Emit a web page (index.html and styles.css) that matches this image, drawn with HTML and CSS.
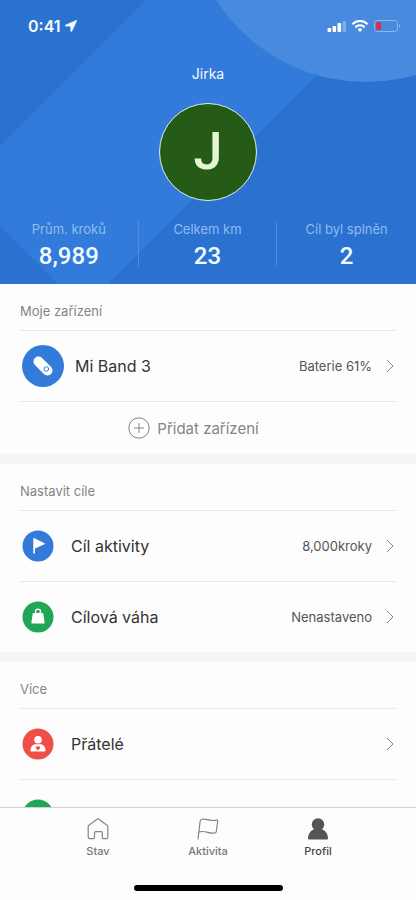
FILE: index.html
```html
<!DOCTYPE html>
<html lang="cs">
<head>
<meta charset="utf-8">
<meta name="viewport" content="width=device-width, initial-scale=1">
<title>Profil</title>
<link rel="stylesheet" href="styles.css">
</head>
<body>
<main class="content">
  <header class="hero">
    <svg class="hero-art" viewBox="0 0 416 284" preserveAspectRatio="xMidYMid slice" aria-hidden="true">
      <path fill="#337bda" d="M146 0H392L108 284H58L0 226V146Z"/>
      <circle cx="366" cy="-96" r="178" fill="#488ade"/>
    </svg>
    <div class="status">
      <div class="status-time">
        <span>0:41</span>
        <svg width="12" height="12" viewBox="0 0 12 12" aria-hidden="true"><path fill="#f2fbff" stroke="#f2fbff" stroke-width=".6" d="M11.2.4.6 5.1c-.6.3-.5 1 .2 1l4.9.1.1 4.900c0 .7.7.8 1 .2L11.600.900c.2-.4 0-.7-.4-.5Z"/></svg>
      </div>
      <svg width="74" height="14" viewBox="0 0 74 14" aria-hidden="true">
        <g fill="#fff">
          <rect x="0.500" y="9" width="3.600" height="4" rx="1"/>
          <rect x="5.500" y="7" width="3.600" height="6" rx="1"/>
          <rect x="10.500" y="4" width="3.600" height="9" rx="1"/>
          <rect x="15.500" y="2" width="3.600" height="11" rx="1" opacity=".3"/>
          <path d="m33 12.900 2.400-2.500a3.500 3.500 0 0 0-4.800 0Z"/>
        </g>
        <g fill="none" stroke="#fff" stroke-width="2.100">
          <path d="M25.400 5.200a10.800 10.800 0 0 1 15.200 0"/>
          <path d="M28.300 8.200a6.700 6.700 0 0 1 9.400 0"/>
        </g>
        <rect x="47.500" y="1.500" width="23" height="11" rx="3" fill="none" stroke="#8db6ea"/>
        <rect x="49" y="3" width="5" height="8" rx="1.500" fill="#d92f4c"/>
        <path d="M72 5v4c1.600-.6 1.600-3.400 0-4Z" fill="#8db6ea"/>
      </svg>
    </div>
    <h1 class="name">Jirka</h1>
    <div class="avatar">J</div>
    <dl class="stats">
      <div class="stat"><dt>Prům. kroků</dt><dd>8,989</dd></div>
      <div class="stat"><dt>Celkem km</dt><dd>23</dd></div>
      <div class="stat"><dt>Cíl byl splněn</dt><dd>2</dd></div>
    </dl>
  </header>

  <section class="group">
    <h2 class="group-title">Moje zařízení</h2>
    <a class="row row-device" href="#band">
      <svg class="icon-large" viewBox="0 0 42 42" aria-hidden="true">
        <circle cx="21" cy="21" r="21" fill="#337bda"/>
        <path d="m16.500 16.500 9 9" stroke="#fff" stroke-width="10" stroke-linecap="round"/>
        <circle cx="24.300" cy="24" r="2.300" fill="none" stroke="#337bda"/>
      </svg>
      <span class="label">Mi Band 3</span>
      <span class="value">Baterie 61%</span>
      <svg class="chevron" viewBox="0 0 8 14" aria-hidden="true"><path d="m1 1 6 6-6 6"/></svg>
    </a>
    <button class="add" type="button">
      <svg width="22" height="22" viewBox="0 0 22 22" fill="none" stroke="#858585" aria-hidden="true"><circle cx="11" cy="11" r="10.200"/><path d="M11 6v10M6 11h10"/></svg>
      Přidat zařízení
    </button>
  </section>

  <section class="group">
    <h2 class="group-title">Nastavit cíle</h2>
    <a class="row" href="#activity">
      <svg class="icon" viewBox="0 0 32 32" aria-hidden="true">
        <circle cx="16" cy="16" r="15.500" fill="#337bda"/>
        <path fill="#fff" d="M11.300 8.600c0-.5.4-.7.8-.5l10.400 5.200c.5.300.5.700 0 .9L13 18.500v4.600c0 .9-1.700.9-1.700 0Z"/>
      </svg>
      <span class="label">Cíl aktivity</span>
      <span class="value">8,000kroky</span>
      <svg class="chevron" viewBox="0 0 8 14" aria-hidden="true"><path d="m1 1 6 6-6 6"/></svg>
    </a>
    <a class="row" href="#weight">
      <svg class="icon" viewBox="0 0 32 32" aria-hidden="true">
        <circle cx="16" cy="16" r="15.500" fill="#21a655"/>
        <circle cx="16" cy="10.600" r="2.500" fill="none" stroke="#fff" stroke-width="1.300"/>
        <path fill="#fff" d="M11.500 12h9c.4 0 .7.300.8.700l1.400 9c.1.500-.2.800-.7.800H10c-.5 0-.8-.3-.7-.8l1.400-9c.1-.4.400-.7.800-.7Z"/>
      </svg>
      <span class="label">Cílová váha</span>
      <span class="value">Nenastaveno</span>
      <svg class="chevron" viewBox="0 0 8 14" aria-hidden="true"><path d="m1 1 6 6-6 6"/></svg>
    </a>
  </section>

  <section class="group">
    <h2 class="group-title">Více</h2>
    <a class="row" href="#friends">
      <svg class="icon" viewBox="0 0 32 32" aria-hidden="true">
        <circle cx="16" cy="16" r="15.500" fill="#f04f49"/>
        <circle cx="16" cy="11.800" r="3.800" fill="#fff"/>
        <path fill="#fff" d="M8.500 22.500c0-3.600 2.300-6.300 5.200-6.300h4.600c2.900 0 5.200 2.700 5.200 6.300 0 .6-.4 1-1 1h-13c-.6 0-1-.4-1-1Z"/>
        <path fill="#f04f49" d="M16 22.300c-3.800-2.600-1.700-5.200 0-3.500 1.700-1.700 3.800.9 0 3.500Z"/>
      </svg>
      <span class="label">Přátelé</span>
      <svg class="chevron" viewBox="0 0 8 14" aria-hidden="true"><path d="m1 1 6 6-6 6"/></svg>
    </a>
    <a class="row" href="#more" aria-label="Další">
      <svg class="icon" viewBox="0 0 32 32" aria-hidden="true"><circle cx="16" cy="16" r="15.500" fill="#21a655"/></svg>
    </a>
  </section>
</main>

<footer class="bottom">
  <nav class="tabs">
    <a class="tab" href="#status">
      <svg width="22" height="22" viewBox="0 0 22 22" fill="none" stroke="#858585" stroke-width="1.200" stroke-linejoin="round" aria-hidden="true"><path d="M1.200 8.600c0-.6.2-1 .7-1.400L10 1.300c.6-.4 1.300-.4 1.900 0L20 7.200c.5.400.8.800.8 1.400v10.700c0 .8-.5 1.300-1.300 1.300h-3.200c-.7 0-1-.4-1-1v-4.900c0-.7-.4-1.100-1.100-1.100H8.600c-.7 0-1.100.4-1.100 1.100v4.900c0 .6-.3 1-1 1H2.500c-.8 0-1.300-.5-1.300-1.300Z"/></svg>
      Stav
    </a>
    <a class="tab" href="#activity-tab">
      <svg width="22" height="22" viewBox="0 0 22 22" fill="none" stroke="#858585" stroke-width="1.200" stroke-linecap="round" stroke-linejoin="round" aria-hidden="true"><path d="M1 21 3.200 3c.1-.8.500-1.300 1.300-1.500 5.700-1.500 8.700 2.400 15.200.6.800-.2 1.100.1 1 .8L19.300 13.500c-.1.800-.5 1.200-1.200 1.400-6.200 1.600-8.800-2.900-15.900-1"/></svg>
      Aktivita
    </a>
    <a class="tab tab-active" href="#profile" aria-current="page">
      <svg width="22" height="22" viewBox="0 0 22 22" fill="#555" aria-hidden="true"><circle cx="11" cy="6.500" r="6.200"/><path d="M1 20.300c0-4.300 2.700-8.300 7-9.300h6c4.300 1 7 5 7 9.300 0 .8-.4 1.200-1.200 1.200H2.200c-.8 0-1.200-.4-1.200-1.200Z"/></svg>
      Profil
    </a>
  </nav>
  <div class="home-bar"></div>
</footer>
</body>
</html>
```
FILE: styles.css
```css
* { box-sizing: border-box; }

body {
  margin: 0;
  height: 100vh;
  display: flex;
  flex-direction: column;
  background: #fdfdfd;
  color: #333;
  font-family: Inter, "Liberation Sans", sans-serif;
}

a { color: inherit; text-decoration: none; }

.content {
  flex: 1;
  min-height: 0;
  overflow: hidden;
}

.hero {
  position: relative;
  display: flex;
  flex-direction: column;
  align-items: center;
  padding-bottom: 18px;
  background: #2b72d0;
  color: #f2fbff;
  isolation: isolate;
}

.hero-art {
  position: absolute;
  inset: 0;
  width: 100%;
  height: 100%;
  z-index: -1;
}

.status {
  align-self: stretch;
  display: flex;
  justify-content: space-between;
  align-items: center;
  height: 52px;
  padding: 0 15px 0 28px;
}

.status-time {
  display: flex;
  align-items: center;
  gap: 4px;
  font-size: 16px;
  font-weight: 600;
}

.name {
  margin: 12px 0 19px;
  font-size: 14px;
  font-weight: 400;
  line-height: 20px;
}

.avatar {
  display: grid;
  place-items: center;
  width: 98px;
  height: 98px;
  border: 1px solid #d9f5f0;
  border-radius: 50%;
  background: #265a17;
  color: #e4f7d2;
  font-family: Roboto, sans-serif;
  font-size: 52px;
  font-weight: 500;
  line-height: 1;
}

.stats {
  align-self: stretch;
  display: grid;
  grid-template-columns: repeat(3, 1fr);
  margin: 20px 0 0;
  text-align: center;
}

.stat {
  display: flex;
  flex-direction: column;
  gap: 5px;
  height: 45px;
  border-right: 1px solid #4d8de0;
}

.stat:last-child { border-right: 0; }

.stat dt {
  color: #8fbbf0;
  font-size: 13px;
  line-height: 16px;
}

.stat dd {
  margin: 0;
  font-family: Roboto, sans-serif;
  font-size: 24px;
  font-weight: 500;
  line-height: 28px;
}

.group { padding: 0 20px; }

.group + .group {
  border-top: 10px solid #f4f5f7;
}

.group-title {
  margin: 0;
  padding: 19px 0 11px;
  border-bottom: 1px solid #e9e9e9;
  color: #858585;
  font-size: 13px;
  font-weight: 400;
  line-height: 16px;
}

.row {
  display: flex;
  align-items: center;
  height: 71px;
  padding: 0 2px;
  border-bottom: 1px solid #e9e9e9;
}

.row:last-child {
  height: 70px;
  border-bottom: 0;
}

.icon { width: 32px; height: 32px; }

.icon-large { width: 42px; height: 42px; }

.label {
  flex: 1;
  margin-left: 17px;
  font-size: 16px;
}

.row-device .label { margin-left: 11px; }

.value {
  color: #555;
  font-size: 13px;
}

.chevron {
  width: 8px;
  height: 14px;
  margin-left: 14px;
  fill: none;
  stroke: #858585;
}

.add {
  display: flex;
  justify-content: center;
  align-items: center;
  gap: 7px;
  width: 100%;
  height: 52px;
  padding: 0 29px 0 0;
  border: 0;
  background: none;
  color: #858585;
  font: inherit;
  font-size: 15px;
}

.bottom {
  display: flex;
  flex-direction: column;
  align-items: center;
  border-top: 1px solid #d2d2d2;
  padding-bottom: 9px;
}

.tabs {
  align-self: stretch;
  display: flex;
  justify-content: center;
}

.tab {
  display: flex;
  flex-direction: column;
  align-items: center;
  gap: 4px;
  width: 110px;
  padding: 10px 0 26px;
  color: #777;
  font-size: 11px;
  font-weight: 500;
  line-height: 15px;
}

.tab-active { color: #444; }

.home-bar {
  width: 149px;
  height: 6px;
  border-radius: 3px;
  background: #000;
}
```
